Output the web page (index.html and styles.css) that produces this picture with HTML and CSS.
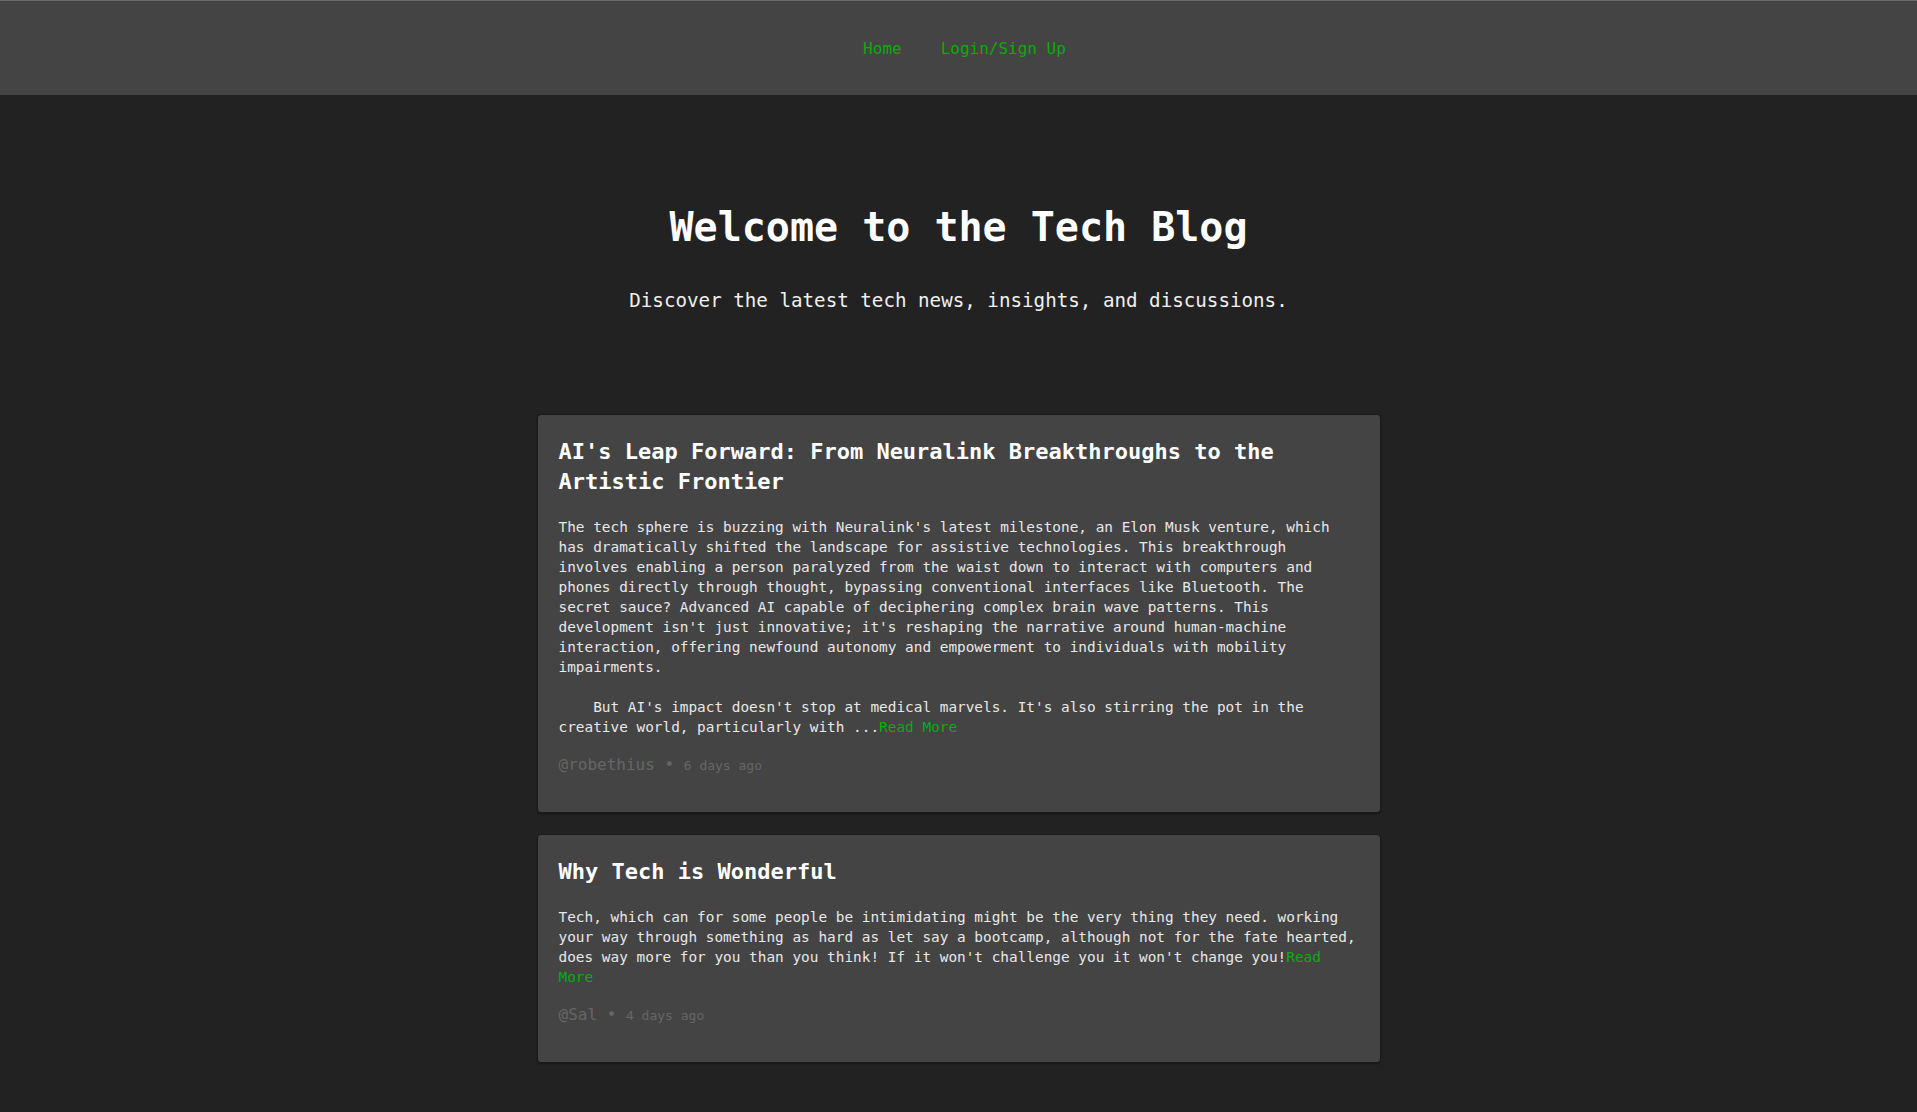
FILE: index.html
```html
<!DOCTYPE html>
<html lang="en">
<head>
<meta charset="utf-8">
<title>Tech Blog</title>
<link rel="stylesheet" href="styles.css">
</head>
<body>
<header class="site-header">
  <nav class="nav">
    <a class="nav-link" href="#">Home</a>
    <a class="nav-link" href="#">Login/Sign Up</a>
  </nav>
</header>
<main class="main">
  <section class="hero">
    <h1 class="hero-title">Welcome to the Tech Blog</h1>
    <p class="hero-sub">Discover the latest tech news, insights, and discussions.</p>
  </section>
  <section class="posts">
    <article class="card">
      <h2 class="card-title">AI's Leap Forward: From Neuralink Breakthroughs to the Artistic Frontier</h2>
      <p class="card-body">The tech sphere is buzzing with Neuralink's latest milestone, an Elon Musk venture, which has dramatically shifted the landscape for assistive technologies. This breakthrough involves enabling a person paralyzed from the waist down to interact with computers and phones directly through thought, bypassing conventional interfaces like Bluetooth. The secret sauce? Advanced AI capable of deciphering complex brain wave patterns. This development isn't just innovative; it's reshaping the narrative around human-machine interaction, offering newfound autonomy and empowerment to individuals with mobility impairments.

    But AI's impact doesn't stop at medical marvels. It's also stirring the pot in the creative world, particularly with ...<a class="read-more" href="#">Read More</a></p>
      <div class="meta"><span class="author">@robethius</span><span class="sep"> • </span><span class="date">6 days ago</span></div>
    </article>
    <article class="card">
      <h2 class="card-title">Why Tech is Wonderful</h2>
      <p class="card-body">Tech, which can for some people be intimidating might be the very thing they need. working your way through something as hard as let say a bootcamp, although not for the fate hearted, does way more for you than you think! If it won't challenge you it won't change you!<a class="read-more" href="#">Read More</a></p>
      <div class="meta"><span class="author">@Sal</span><span class="sep"> • </span><span class="date">4 days ago</span></div>
    </article>
  </section>
</main>
</body>
</html>
```

FILE: styles.css
```css
html, body {
  margin: 0;
  padding: 0;
}

body {
  background: #222222;
  color: #e6e6e6;
  font-family: "DejaVu Sans Mono", "Liberation Mono", monospace;
  font-size: 16px;
}

.site-header {
  background: #444444;
  border-top: 1px solid #686868;
  height: 94px;
  display: flex;
  align-items: center;
  justify-content: center;
}

.nav {
  display: flex;
  gap: 39px;
  padding-left: 12px;
}

.nav-link {
  color: #0aab0a;
  text-decoration: none;
  font-size: 16px;
}

.main {
  display: flex;
  flex-direction: column;
  align-items: center;
}

.hero {
  padding-top: 109px;
  padding-bottom: 102px;
  text-align: center;
}

.hero-title {
  margin: 0 0 39px;
  font-size: 40px;
  font-weight: bold;
  color: #ffffff;
  line-height: normal;
}

.hero-sub {
  margin: 0;
  font-size: 19.2px;
  color: #f0f0f0;
  line-height: normal;
}

.posts {
  display: flex;
  flex-direction: column;
  gap: 21px;
  padding-bottom: 40px;
}

.card {
  width: 802px;
  background: #444444;
  border: 1px solid #1a1a1a;
  border-radius: 4px;
  padding: 22px 19px 20px 21px;
  box-shadow: 0 1px 2px rgba(0, 0, 0, 0.35);
}

.card-title {
  margin: 0 0 20px;
  font-size: 22px;
  line-height: 30px;
  font-weight: bold;
  color: #ffffff;
}

.card-body {
  margin: 0 0 18px;
  font-size: 14.4px;
  line-height: 20px;
  color: #e8e8e8;
  white-space: pre-wrap;
}

.read-more {
  color: #0aab0a;
  text-decoration: none;
}

.meta {
  color: #666666;
  font-size: 16px;
  margin-bottom: 18px;
  line-height: normal;
}

.date {
  font-size: 13px;
}
```
